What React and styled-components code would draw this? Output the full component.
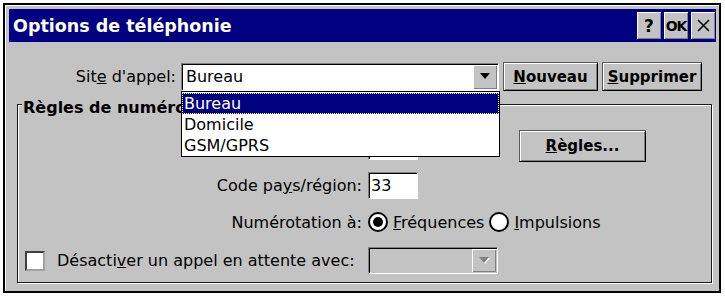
import React from "react";
import styled, { createGlobalStyle, css } from "styled-components";

const GlobalStyle = createGlobalStyle`
  body {
    margin: 0;
    background: #fff;
    font-family: "DejaVu Sans", "Liberation Sans", sans-serif;
    font-size: 16px;
    color: #000;
  }
`;

const FACE = "#c3c3c3";

// bordures 3D façon Windows CE
const raised = css`
  border: 1px solid;
  border-color: #5a5a5a #000 #000 #5a5a5a;
  box-shadow: inset 1px 1px 0 #fff, inset -1px -1px 0 #808080;
`;

const sunken = css`
  border: 1px solid;
  border-color: #808080 #fff #fff #808080;
  box-shadow: inset 1px 1px 0 #000;
`;

const Dialog = styled.div`
  box-sizing: border-box;
  width: 718px;
  height: 290px;
  margin: 3px 0 0 3px;
  border: 2px solid #000;
  padding: 4px 3px 0 4px;
  background: ${FACE};
  box-shadow: inset 1px 1px 0 #fff;
`;

const TitleBar = styled.div`
  height: 33px;
  background: #000080;
  display: flex;
  align-items: center;
  padding: 0 1px 0 4px;
  color: #fff;
`;

const Title = styled.div`
  flex: 1;
  font-weight: bold;
  font-size: 17.5px;
`;

const TitleButtons = styled.div`
  display: flex;
  gap: 3px;
`;

const TitleButton = styled.div`
  box-sizing: border-box;
  width: 24px;
  height: 27px;
  background: ${FACE};
  color: #000;
  display: flex;
  align-items: center;
  justify-content: center;
  font-weight: bold;
  font-size: ${(p) => p.$size || 16}px;
  letter-spacing: ${(p) => p.$ls || 0}px;
  box-shadow: inset 1px 1px 0 #fff, inset -1px -1px 0 #808080;
`;

const TopRow = styled.div`
  display: flex;
  align-items: center;
  height: 29px;
  margin-top: 20px;
`;

const Label = styled.div`
  flex: none;
  width: ${(p) => p.$w}px;
  text-align: right;
  white-space: nowrap;
`;

const ComboWrap = styled.div`
  position: relative;
  flex: none;
  width: ${(p) => p.$w}px;
  margin-left: ${(p) => p.$ml || 0}px;
`;

const Combo = styled.div`
  box-sizing: border-box;
  height: ${(p) => p.$h || 28}px;
  display: flex;
  align-items: center;
  background: ${(p) => (p.$disabled ? FACE : "#fff")};
  ${sunken};
  padding: 1px 1px 1px 2px;
`;

const ComboText = styled.div`
  flex: 1;
  padding-left: 2px;
`;

const ArrowButton = styled.div`
  box-sizing: border-box;
  width: 24px;
  height: 100%;
  background: ${FACE};
  display: flex;
  align-items: center;
  justify-content: center;
  box-shadow: inset 1px 1px 0 #fff, inset -1px -1px 0 #808080;
`;

const DropList = styled.div`
  position: absolute;
  top: 100%;
  left: 0;
  z-index: 10;
  box-sizing: border-box;
  width: 319px;
  height: 66px;
  background: #fff;
  border: 1px solid #000;
  padding-top: 1px;
`;

const DropItem = styled.div`
  box-sizing: border-box;
  height: 21px;
  line-height: 19px;
  padding-left: 1px;
  ${(p) =>
    p.$active &&
    css`
      background: #000080;
      color: #fff;
      border: 1px dotted #ffffd8;
    `}
  ${(p) => !p.$active && css`border: 1px solid transparent;`}
`;

const PushButton = styled.div`
  box-sizing: border-box;
  flex: none;
  width: ${(p) => p.$w}px;
  height: ${(p) => p.$h || 29}px;
  margin-left: ${(p) => p.$ml || 0}px;
  background: ${FACE};
  ${raised};
  display: flex;
  align-items: center;
  justify-content: center;
  font-weight: bold;
  font-size: 15px;
  white-space: nowrap;
`;

const Group = styled.div`
  position: relative;
  margin: 13px 4px 0 8px;
  border: 1px solid #1a1a1a;
  box-shadow: 1px 1px 0 #fff, inset 1px 1px 0 #fff;
  padding: 25px 0 8px 0;
`;

const GroupTitle = styled.div`
  position: absolute;
  top: -7px;
  left: 4px;
  padding: 0 1px;
  background: ${FACE};
  font-weight: bold;
  line-height: 20px;
`;

const FieldRow = styled.div`
  display: grid;
  grid-template-columns: 344px auto;
  column-gap: 6px;
  align-items: center;
  height: ${(p) => p.$h}px;
  margin-top: ${(p) => p.$mt || 0}px;
`;

const Controls = styled.div`
  display: flex;
  align-items: center;
`;

const Edit = styled.div`
  box-sizing: border-box;
  width: 50px;
  height: 27px;
  background: #fff;
  ${sunken};
  padding-left: 2px;
  line-height: 25px;
`;

const Radio = styled.div`
  box-sizing: border-box;
  flex: none;
  width: 20px;
  height: 20px;
  border-radius: 50%;
  border: 2px solid #000;
  background: #fff;
  display: flex;
  align-items: center;
  justify-content: center;
  margin-left: ${(p) => p.$ml || 0}px;
  &::after {
    content: "";
    display: ${(p) => (p.$checked ? "block" : "none")};
    width: 10px;
    height: 10px;
    border-radius: 50%;
    background: #000;
  }
`;

const RadioText = styled.span`
  margin-left: 5px;
`;

const CheckLine = styled.div`
  display: flex;
  align-items: center;
  padding-left: 7px;
  white-space: nowrap;
`;

const CheckBox = styled.div`
  box-sizing: border-box;
  width: 20px;
  height: 20px;
  background: #fff;
  border: 2px solid;
  border-color: #404040 #a0a0a0 #a0a0a0 #404040;
  margin-right: 12px;
`;

const Arrow = ({ disabled }) => (
  <svg width="11" height="7" viewBox="0 0 11 7">
    {disabled && <polygon points="1,1 11,1 6,7" fill="#fff" />}
    <polygon points="0,0 10,0 5,6" fill={disabled ? "#808080" : "#000"} />
  </svg>
);

const Close = () => (
  <svg width="13" height="13" viewBox="0 0 13 13">
    <path d="M1 1 L12 12 M12 1 L1 12" stroke="#000" strokeWidth="1.6" />
  </svg>
);

const App = () => {
  const sites = ["Bureau", "Domicile", "GSM/GPRS"];

  return (
    <React.Fragment>
      <GlobalStyle />
      <Dialog>
        <TitleBar>
          <Title>Options de téléphonie</Title>
          <TitleButtons>
            <TitleButton $size={17}>?</TitleButton>
            <TitleButton $size={14} $ls={-1}>OK</TitleButton>
            <TitleButton>
              <Close />
            </TitleButton>
          </TitleButtons>
        </TitleBar>

        <TopRow>
          <Label $w={167}>
            Sit<u>e</u> d'appel:
          </Label>
          <ComboWrap $w={318} $ml={5}>
            <Combo>
              <ComboText>Bureau</ComboText>
              <ArrowButton>
                <Arrow />
              </ArrowButton>
            </Combo>
            <DropList>
              {sites.map((s, idx) => (
                <DropItem key={idx} $active={idx === 0}>
                  {s}
                </DropItem>
              ))}
            </DropList>
          </ComboWrap>
          <PushButton $w={95} $ml={4}>
            <u>N</u>ouveau
          </PushButton>
          <PushButton $w={100} $ml={4}>
            <u>S</u>upprimer
          </PushButton>
        </TopRow>

        <Group>
          <GroupTitle>Règles de numérotation</GroupTitle>

          {/* ligne masquée par la liste déroulante */}
          <FieldRow $h={32}>
            <Label />
            <Controls>
              <Edit />
              <PushButton $w={127} $h={32} $ml={101}>
                <u>R</u>ègles...
              </PushButton>
            </Controls>
          </FieldRow>

          <FieldRow $h={27} $mt={10}>
            <Label>
              Code pa<u>y</u>s/région:
            </Label>
            <Controls>
              <Edit>33</Edit>
            </Controls>
          </FieldRow>

          <FieldRow $h={22} $mt={12}>
            <Label>Numérotation à:</Label>
            <Controls>
              <Radio $checked />
              <RadioText>
                <u>F</u>réquences
              </RadioText>
              <Radio $ml={5} />
              <RadioText>
                <u>I</u>mpulsions
              </RadioText>
            </Controls>
          </FieldRow>

          <FieldRow $h={27} $mt={14}>
            <CheckLine>
              <CheckBox />
              <span>
                Désacti<u>v</u>er un appel en attente avec:
              </span>
            </CheckLine>
            <Controls>
              <ComboWrap $w={130}>
                <Combo $h={27} $disabled>
                  <ComboText />
                  <ArrowButton>
                    <Arrow disabled />
                  </ArrowButton>
                </Combo>
              </ComboWrap>
            </Controls>
          </FieldRow>
        </Group>
      </Dialog>
    </React.Fragment>
  );
};

export default App;
